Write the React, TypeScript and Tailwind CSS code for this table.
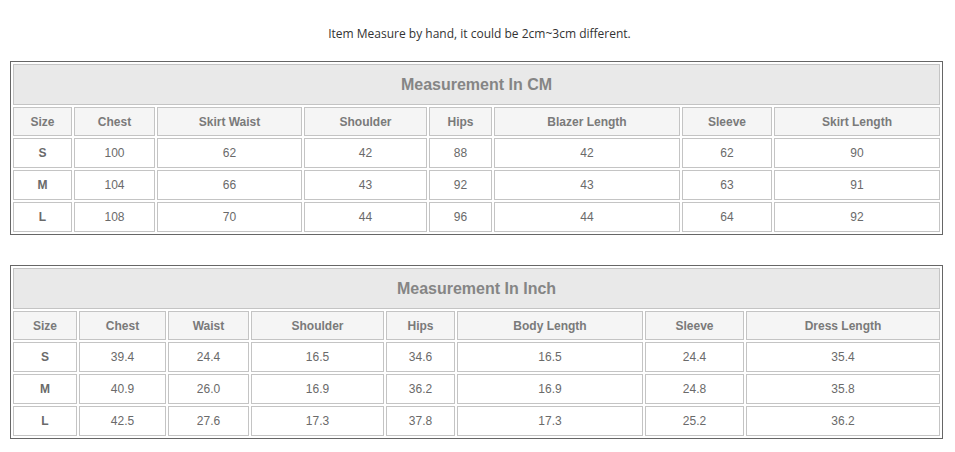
const cmCols = [
  { label: 'Size', w: 'w-[59px]' },
  { label: 'Chest', w: 'w-[81px]' },
  { label: 'Skirt Waist', w: 'w-[145px]' },
  { label: 'Shoulder', w: 'w-[123px]' },
  { label: 'Hips', w: 'w-[63px]' },
  { label: 'Blazer Length', w: 'w-[186px]' },
  { label: 'Sleeve', w: 'w-[90px]' },
  { label: 'Skirt Length', w: 'w-[166px]' },
];

const cmRows = [
  ['S', '100', '62', '42', '88', '42', '62', '90'],
  ['M', '104', '66', '43', '92', '43', '63', '91'],
  ['L', '108', '70', '44', '96', '44', '64', '92'],
];

const inchCols = [
  { label: 'Size', w: 'w-[64px]' },
  { label: 'Chest', w: 'w-[87px]' },
  { label: 'Waist', w: 'w-[81px]' },
  { label: 'Shoulder', w: 'w-[133px]' },
  { label: 'Hips', w: 'w-[69px]' },
  { label: 'Body Length', w: 'w-[186px]' },
  { label: 'Sleeve', w: 'w-[99px]' },
  { label: 'Dress Length', w: 'w-[194px]' },
];

const inchRows = [
  ['S', '39.4', '24.4', '16.5', '34.6', '16.5', '24.4', '35.4'],
  ['M', '40.9', '26.0', '16.9', '36.2', '16.9', '24.8', '35.8'],
  ['L', '42.5', '27.6', '17.3', '37.8', '17.3', '25.2', '36.2'],
];

type Col = { label: string; w: string };

function SizeTable({ title, cols, rows }: { title: string; cols: Col[]; rows: string[][] }) {
  return (
    <table className="ml-[10px] w-[933px] border-separate border-spacing-[2px] border border-[#666] font-['Liberation_Sans',Arial,sans-serif] text-[12px]">
      <tbody>
        <tr>
          <td
            colSpan={cols.length}
            className="h-[41px] border border-[#c4c4c4] bg-[#e9e9e9] p-0 text-center text-[16px] font-bold text-[#858585]"
          >
            {title}
          </td>
        </tr>
        <tr>
          {cols.map(c => (
            <th
              key={c.label}
              className={`${c.w} h-[29px] border border-[#c4c4c4] bg-[#f5f5f5] p-0 text-center font-bold text-[#7a7a7a]`}
            >
              {c.label}
            </th>
          ))}
        </tr>
        {rows.map(r => (
          <tr key={r[0]}>
            {r.map((v, i) => (
              <td
                key={i}
                className={`h-[30px] border border-[#c4c4c4] bg-white p-0 text-center text-[#6a6a6a] ${
                  i === 0 ? 'font-bold' : ''
                }`}
              >
                {v}
              </td>
            ))}
          </tr>
        ))}
      </tbody>
    </table>
  );
}

export default function App() {
  return (
    <div className="h-[452px] w-[955px] bg-white">
      <p className="pl-[4px] pt-[26px] text-center font-['Open_Sans',sans-serif] text-[12px] leading-4 text-[#333]">
        Item Measure by hand, it could be 2cm~3cm different.
      </p>
      <div className="mt-[19px]">
        <SizeTable title="Measurement In CM" cols={cmCols} rows={cmRows} />
      </div>
      <div className="mt-[30px]">
        <SizeTable title="Measurement In Inch" cols={inchCols} rows={inchRows} />
      </div>
    </div>
  );
}
